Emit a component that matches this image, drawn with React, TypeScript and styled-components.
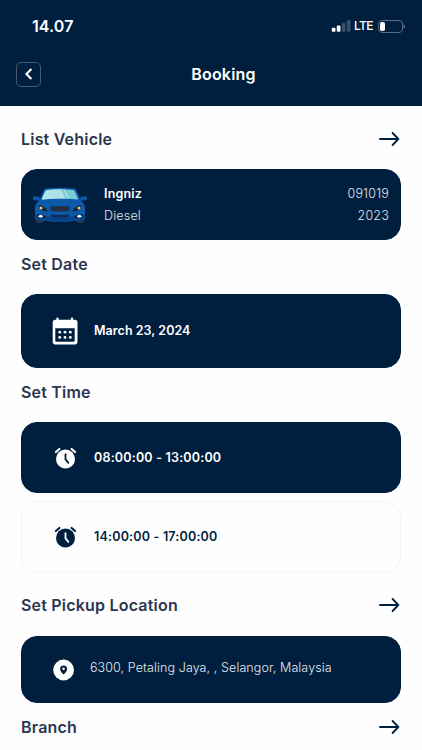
import * as React from "react";
import styled, { createGlobalStyle } from "styled-components";

const NAVY = "#001f3e";

const App = () => {
  return (
    <>
      <GlobalStyle />
      <Screen>
        <Header />
        <Content>
          <SectionHeading title="List Vehicle" top={21} bottom={18} link />
          <VehicleCard />
          <SectionHeading title="Set Date" top={12} bottom={18} />
          <Card $height={74}>
            <IconSlot>
              <CalendarIcon />
            </IconSlot>
            <Label $spacing={0.05}>March 23, 2024</Label>
          </Card>
          <SectionHeading title="Set Time" top={12} bottom={18} />
          <Slots>
            <Card $height={71}>
              <IconSlot>
                <AlarmIcon hands={NAVY} />
              </IconSlot>
              <Label $spacing={0.2}>08:00:00 - 13:00:00</Label>
            </Card>
            <Card $height={72} $outlined>
              <IconSlot>
                <AlarmIcon hands="white" />
              </IconSlot>
              <Label $spacing={0.2}>14:00:00 - 17:00:00</Label>
            </Card>
          </Slots>
          <SectionHeading title="Set Pickup Location" top={20} bottom={19} link />
          <Card $height={67}>
            <PinSlot>
              <PinIcon />
            </PinSlot>
            <Address>6300, Petaling Jaya, , Selangor, Malaysia</Address>
          </Card>
          <SectionHeading title="Branch" top={12} bottom={18} link />
        </Content>
      </Screen>
    </>
  );
};

export default App;

const GlobalStyle = createGlobalStyle`
  * {
    box-sizing: border-box;
  }
  body {
    margin: 0;
    background: #fefefe;
    font-family: Inter, "Liberation Sans", sans-serif;
    overflow: hidden;
  }
  svg {
    display: block;
    flex: none;
  }
`;

const Screen = styled.div`
  width: 422px;
  height: 750px;
  overflow: hidden;
  background: #fefefe;
`;

const StyledHeader = styled.header`
  height: 106px;
  background: ${NAVY};
  color: white;
`;

const StatusBar = styled.div`
  display: flex;
  justify-content: space-between;
  align-items: center;
  height: 52px;
  padding: 0 17px 0 32px;
`;

const Clock = styled.div`
  font-size: 16px;
  font-weight: 600;
  line-height: 20px;
  letter-spacing: 0.1px;
`;

const StatusIcons = styled.div`
  display: flex;
  align-items: center;
`;

const Network = styled.span`
  margin: 0 5px 0 3px;
  font-size: 12px;
  font-weight: 500;
  line-height: 14px;
  letter-spacing: -0.6px;
`;

const NavBar = styled.div`
  display: grid;
  grid-template-columns: 25px 1fr;
  align-items: center;
  height: 44px;
  padding: 0 16px;
`;

const BackButton = styled.button`
  display: flex;
  align-items: center;
  justify-content: center;
  width: 25px;
  height: 25px;
  padding: 0;
  border: 1px solid #435974;
  border-radius: 5px;
  background: none;
`;

const PageTitle = styled.h1`
  margin: 0;
  font-size: 16px;
  font-weight: 600;
  line-height: 24px;
  letter-spacing: 0.2px;
  text-align: center;
`;

const Content = styled.main`
  padding: 0 21px;
`;

const HeadingRow = styled.div<{ $top: number; $bottom: number }>`
  display: flex;
  align-items: center;
  justify-content: space-between;
  height: 24px;
  margin: ${({ $top, $bottom }) => `${$top}px 0 ${$bottom}px`};
`;

const Heading = styled.h2`
  margin: 0;
  color: #2a3650;
  font-size: 16px;
  font-weight: 600;
  line-height: 24px;
  letter-spacing: 0.2px;
`;

const Card = styled.section<{ $height: number; $outlined?: boolean }>`
  display: flex;
  align-items: center;
  height: ${({ $height }) => $height}px;
  border: 1px solid ${({ $outlined }) => ($outlined ? "#f3f4f5" : NAVY)};
  border-radius: 16px;
  background: ${({ $outlined }) => ($outlined ? "#fefefe" : NAVY)};
  color: ${({ $outlined }) => ($outlined ? NAVY : "white")};
`;

const Slots = styled.div`
  display: flex;
  flex-direction: column;
  gap: 8px;
`;

const IconSlot = styled.div`
  display: flex;
  justify-content: center;
  width: 28px;
  margin: 0 15px 0 29px;
`;

const PinSlot = styled.div`
  margin: 0 15px 0 31px;
`;

const Label = styled.div<{ $spacing: number }>`
  font-size: 12.5px;
  font-weight: 600;
  line-height: 20px;
  letter-spacing: ${({ $spacing }) => $spacing}px;
`;

const Address = styled.div`
  padding-bottom: 4px;
  color: #e6eaf0;
  font-size: 12.5px;
  font-weight: 300;
  line-height: 20px;
  letter-spacing: 0.1px;
  white-space: nowrap;
`;

const Details = styled.div`
  display: flex;
  flex: 1;
  flex-direction: column;
  gap: 2px;
  margin: 1px 11px 0 16px;
`;

const DetailRow = styled.div`
  display: flex;
  justify-content: space-between;
  color: #e0e6ed;
  font-size: 12.5px;
  font-weight: 300;
  line-height: 20px;
  letter-spacing: 0.2px;
  strong {
    color: white;
    font-weight: 600;
  }
`;

const Header = () => {
  return (
    <StyledHeader>
      <StatusBar>
        <Clock>14.07</Clock>
        <StatusIcons>
          <SignalIcon />
          <Network>LTE</Network>
          <BatteryIcon />
        </StatusIcons>
      </StatusBar>
      <NavBar>
        <BackButton aria-label="Back">
          <svg width="9" height="12" viewBox="0 0 9 12" fill="none">
            <path d="M7.4 1L2.4 6l5 5" stroke="white" strokeWidth="2.1" />
          </svg>
        </BackButton>
        <PageTitle>Booking</PageTitle>
      </NavBar>
    </StyledHeader>
  );
};

type SectionHeadingProps = {
  title: string;
  top: number;
  bottom: number;
  link?: boolean;
};

const SectionHeading = ({ title, top, bottom, link }: SectionHeadingProps) => {
  return (
    <HeadingRow $top={top} $bottom={bottom}>
      <Heading>{title}</Heading>
      {link && <ArrowIcon />}
    </HeadingRow>
  );
};

const VehicleCard = () => {
  return (
    <Card $height={71}>
      <CarSlot>
        <CarIcon />
      </CarSlot>
      <Details>
        <DetailRow>
          <strong>Ingniz</strong>
          <span>091019</span>
        </DetailRow>
        <DetailRow>
          <span>Diesel</span>
          <span>2023</span>
        </DetailRow>
      </Details>
    </Card>
  );
};

const CarSlot = styled.div`
  padding-top: 2px;
  margin-left: 10px;
`;

const SignalIcon = () => (
  <svg width="20" height="12" viewBox="0 0 20 12" fill="white">
    <rect x="0.8" y="7.7" width="3.7" height="4" rx="1" />
    <rect x="5.8" y="5.4" width="3.7" height="6.3" rx="1" />
    <rect x="10.8" y="2.8" width="3.7" height="8.9" rx="1" opacity="0.22" />
    <rect x="15.8" y="0.2" width="3.7" height="11.5" rx="1" opacity="0.22" />
  </svg>
);

const BatteryIcon = () => (
  <svg width="27" height="13" viewBox="0 0 27 13">
    <rect x="0.5" y="0.5" width="24" height="12" rx="3.6" fill="none" stroke="#5b6d83" />
    <rect x="2" y="2" width="5" height="9" rx="1.8" fill="white" />
    <path d="M25.7 4.5v4c1.6-.7 1.6-3.3 0-4z" fill="#8290a2" />
  </svg>
);

const ArrowIcon = () => (
  <svg width="24" height="24" viewBox="0 0 24 24" fill="none">
    <path
      d="M3 12h18.4M15.6 6l5.8 6-5.8 6"
      stroke={NAVY}
      strokeWidth="1.8"
      strokeLinecap="round"
      strokeLinejoin="round"
    />
  </svg>
);

const CalendarIcon = () => (
  <svg width="26" height="28" viewBox="0 0 26 28">
    <path
      fill="currentColor"
      fillRule="evenodd"
      d="M5.5.5a1.200 1.200 0 0 1 1.200 1.200v1h12.100v-1a1.200 1.200 0 0 1 2.400 0v1h1.700a2.600 2.600 0 0 1 2.600 2.600v19.500a2.600 2.600 0 0 1-2.600 2.600H3.300a2.600 2.600 0 0 1-2.600-2.600V5.300a2.600 2.600 0 0 1 2.600-2.600h1v-1A1.200 1.200 0 0 1 5.500.5zM3.300 11.200v12.400c0 .8.4 1.200 1.200 1.200h17c.8 0 1.200-.4 1.200-1.200V11.200z"
    />
    <g fill="currentColor">
      {[15.2, 20.4].map((cy) =>
        [7.7, 13, 18.3].map((cx) => <circle key={`${cx}-${cy}`} cx={cx} cy={cy} r="1.4" />)
      )}
    </g>
  </svg>
);

const AlarmIcon = ({ hands }: { hands: string }) => (
  <svg width="24" height="22" viewBox="0 0 24 22">
    <circle cx="12.5" cy="12" r="9.5" fill="currentColor" />
    <path
      d="M2.9 5.1l3.5-3.2M22.1 5.1l-3.5-3.2"
      fill="none"
      stroke="currentColor"
      strokeWidth="2.1"
      strokeLinecap="round"
    />
    <path
      d="M12.5 7.2v5.2l2.9 3.5"
      fill="none"
      stroke={hands}
      strokeWidth="1.8"
      strokeLinecap="round"
      strokeLinejoin="round"
    />
  </svg>
);

const PinIcon = () => (
  <svg width="22" height="22" viewBox="0 0 22 22">
    <circle cx="10.6" cy="11" r="10.4" fill="white" />
    <path
      fill={NAVY}
      fillRule="evenodd"
      d="M10.6 6.5a3.5 3.5 0 0 1 3.5 3.5c0 2.1-1.8 4-3.5 5.6C8.9 14 7.1 12.1 7.1 10a3.5 3.5 0 0 1 3.5-3.5zM10.6 8.4a1.3 1.3 0 1 0 0 2.6 1.3 1.3 0 0 0 0-2.6z"
    />
  </svg>
);

const CarIcon = () => (
  <svg width="56" height="38" viewBox="0 0 56 38">
    <path d="M4 29h8v5.5q0 1.5-1.5 1.5h-5q-1.5 0-1.5-1.5zM44 29h8v5.5q0 1.5-1.5 1.5h-5q-1.5 0-1.5-1.5z" fill="#27334a" />
    <path
      d="M14 1.5Q28 .2 42 1.5q1.8.2 2.5 2L48.5 13q4 3 4.5 8v10q0 2-2 2.3Q28 36 5 33.3 3 33 3 31V21q.5-5 4.5-8l4-9.5q.7-1.8 2.5-2z"
      fill="#0d59aa"
    />
    <path d="M3 28q25 5 50 0v3.5q0 1.5-2 1.8Q28 36 5 33.3q-2-.3-2-1.8z" fill="#084588" />
    <path d="M8.5 13.5 7.3 10Q3 8.6 1 10.2q-1 1.8.8 2.7 3 .9 6.7.6zM47.5 13.5l1.2-3.5q4.3-1.4 6.3.2 1 1.8-.8 2.7-3 .9-6.7.6z" fill="#0a56a8" />
    <path d="M15 3Q28 1.6 41 3q1.5.2 2 1.700l3 6.800q.3 1-.8 1Q28 10.5 10.8 12.5q-1.1 0-.8-1l3-6.800Q13.5 3.2 15 3z" fill="#79cbd6" />
    <path d="M15 3q7-.8 14-.7l4.5 9.2q-11-.3-22.7 1-1.1 0-.8-1l3-6.8Q13.5 3.2 15 3zM31 2.3l1.7.1 4.6 9.3-1.6-.1z" fill="#afe3e7" />
    <path d="M6.5 18q6 .4 9.5 6.5-5 0-8.3-2.2zM49.5 18q-6 .4-9.5 6.5 5 0 8.3-2.2z" fill="#122744" />
    <circle cx="9" cy="21" r="1.5" fill="#f6c86a" />
    <circle cx="47" cy="21" r="1.5" fill="#f6c86a" />
    <path d="M20 19.5q8-.8 16 0 2.5.3 1.5 2.5l-.8 1.700q-.4.8-1.4.8H20.700q-1 0-1.400-.8l-.8-1.700q-1-2.200 1.500-2.500z" fill="#222f43" />
    <path d="M20 27.5q8 .8 16 0 1.500 0 1.500 1.200T36 30.200q-8 .6-16 0-1.500-.3-1.500-1.500t1.500-1.200zM5 27l7 1.200q2.500.5 2.500 2.600h-8q-1.500-1.300-1.500-3.800zM51 27l-7 1.200q-2.500.5-2.500 2.600h8q1.500-1.300 1.500-3.800z" fill="#102c54" />
    <ellipse cx="8.6" cy="29.3" rx="2" ry="1.3" fill="white" />
    <ellipse cx="47.4" cy="29.3" rx="2" ry="1.3" fill="white" />
  </svg>
);
